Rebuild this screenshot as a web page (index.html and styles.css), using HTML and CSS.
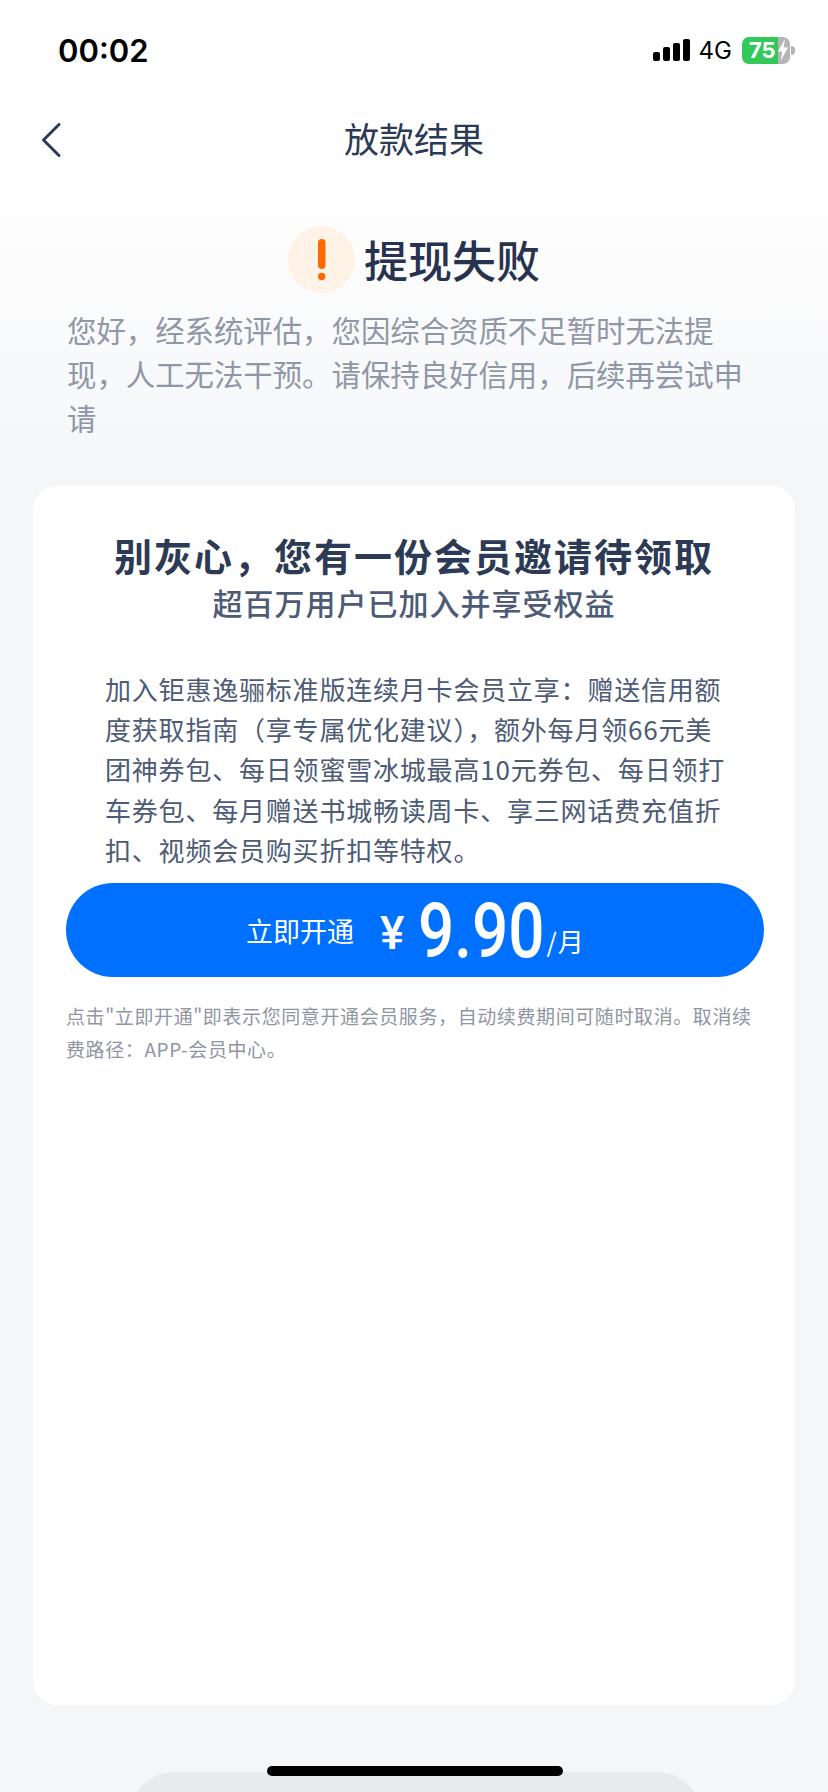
FILE: index.html
```html
<!DOCTYPE html>
<html lang="zh-CN">
<head>
<meta charset="utf-8">
<title>放款结果</title>
<link rel="stylesheet" href="styles.css">
</head>
<body>
<div class="page">
  <header class="status-bar">
    <span class="clock">00:02</span>
    <div class="status-icons">
      <div class="signal">
        <i class="bar bar-1"></i><i class="bar bar-2"></i><i class="bar bar-3"></i><i class="bar bar-4"></i>
      </div>
      <span class="network">4G</span>
      <div class="battery">
        <div class="battery-body">
          <span class="battery-level">75</span>
          <svg class="bolt" viewBox="0 0 12 22" width="12" height="22"><path d="M8 0 1 12.5h4.2L3.6 22 11 8.6H6.6L8 0Z" fill="#fff"/></svg>
        </div>
        <i class="battery-nub"></i>
      </div>
    </div>
  </header>

  <nav class="nav">
    <svg class="back" viewBox="0 0 20 34" width="20" height="34"><path d="M18 1.5 2.5 17 18 32.5" fill="none" stroke="#2d3a55" stroke-width="3" stroke-linecap="round" stroke-linejoin="round"/></svg>
    <h1 class="nav-title">放款结果</h1>
  </nav>

  <section class="result">
    <div class="result-head">
      <svg class="alert" viewBox="0 0 67 67" width="67" height="67">
        <circle cx="33.5" cy="33.5" r="33.5" fill="#fff3e8"/>
        <rect x="30" y="13" width="7.5" height="30" rx="3.7" fill="#ff6a00"/>
        <circle cx="33.7" cy="50.5" r="3.7" fill="#ff6a00"/>
      </svg>
      <h2 class="result-title">提现失败</h2>
    </div>
    <p class="result-text">您好，经系统评估，您因综合资质不足暂时无法提现，人工无法干预。请保持良好信用，后续再尝试申请</p>
  </section>

  <main class="card">
    <h3 class="card-title">别灰心，您有一份会员邀请待领取</h3>
    <p class="card-sub">超百万用户已加入并享受权益</p>
    <p class="card-body">加入钜惠逸骊标准版连续月卡会员立享：赠送信用额度获取指南（享专属优化建议），额外每月领66元美团神券包、每日领蜜雪冰城最高10元券包、每日领打车券包、每月赠送书城畅读周卡、享三网话费充值折扣、视频会员购买折扣等特权。</p>
    <button class="cta" type="button">
      <span class="cta-label">立即开通</span>
      <span class="cta-currency">¥</span>
      <span class="cta-amount"><span class="cta-digits">9.90</span></span>
      <span class="cta-unit">/月</span>
    </button>
    <p class="note">点击"立即开通"即表示您同意开通会员服务，自动续费期间可随时取消。取消续费路径：APP-会员中心。</p>
  </main>

  <div class="bottom-sheet"></div>
  <div class="home-indicator"></div>
</div>
</body>
</html>
```

FILE: styles.css
```css
* {
  box-sizing: border-box;
}

html,
body {
  margin: 0;
  padding: 0;
}

body {
  font-family: "Noto Sans CJK SC", "Noto Sans", sans-serif;
}

.page {
  position: relative;
  width: 828px;
  height: 1792px;
  overflow: hidden;
  display: flex;
  flex-direction: column;
  background: linear-gradient(180deg, #ffffff 0, #ffffff 160px, #f5f6f8 480px, #f5f6f8 100%);
}

/* Status bar */
.status-bar {
  height: 97px;
  flex: none;
  display: flex;
  align-items: center;
  justify-content: space-between;
  padding: 3px 33px 0 58px;
}

.clock {
  font-family: Inter, sans-serif;
  font-size: 31px;
  font-weight: 600;
  color: #000;
}

.status-icons {
  display: flex;
  align-items: center;
}

.signal {
  display: flex;
  align-items: flex-end;
  gap: 3px;
  height: 22px;
}

.bar {
  display: block;
  width: 7px;
  background: #000;
  border-radius: 2px;
}

.bar-1 { height: 9px; }
.bar-2 { height: 14px; }
.bar-3 { height: 18px; }
.bar-4 { height: 22px; }

.network {
  margin-left: 9px;
  font-family: Inter, sans-serif;
  font-size: 24px;
  color: #000;
}

.battery {
  margin-left: 10px;
  display: flex;
  align-items: center;
}

.battery-body {
  width: 48px;
  height: 27px;
  border-radius: 7px;
  background: linear-gradient(90deg, #34c85a 0, #34c85a 36px, #b5b5b5 36px);
  display: flex;
  align-items: center;
  padding-left: 7px;
}

.battery-level {
  font-family: Inter, sans-serif;
  font-size: 22px;
  font-weight: 700;
  line-height: 27px;
  color: #fff;
}

.bolt {
  flex: none;
  margin-left: 1px;
}

.battery-nub {
  display: block;
  width: 4px;
  height: 9px;
  margin-left: 1px;
  background: #b5b5b5;
  border-radius: 0 4px 4px 0;
}

/* Navigation bar */
.nav {
  position: relative;
  height: 80px;
  flex: none;
  display: flex;
  align-items: center;
  justify-content: center;
}

.back {
  position: absolute;
  left: 41px;
  top: 26px;
}

.nav-title {
  margin: 0;
  font-size: 35px;
  font-weight: 400;
  color: #2d3a55;
}

/* Result summary */
.result {
  padding: 49px 67px 0 68px;
  flex: none;
}

.result-head {
  display: flex;
  align-items: center;
  justify-content: center;
  gap: 9px;
}

.alert {
  margin-left: -1px;
}

.result-title {
  margin: 0;
  font-size: 44px;
  line-height: 67px;
  font-weight: 500;
  color: #28324f;
}

.result-text {
  margin: 14px 0 0 -1px;
  font-size: 29.4px;
  line-height: 44px;
  color: #8f97a6;
}

/* Membership card */
.card {
  width: 762px;
  height: 1219px;
  flex: none;
  margin: 47px 0 0 33px;
  padding: 44px 33px 0;
  background: #fff;
  border-radius: 24px;
}

.card-title {
  margin: 0;
  text-align: center;
  font-size: 38px;
  line-height: 50px;
  font-weight: 700;
  letter-spacing: 2px;
  color: #2d3a55;
}

.card-sub {
  margin: 1px 0 0;
  text-align: center;
  font-size: 30px;
  line-height: 42px;
  font-weight: 500;
  letter-spacing: 1px;
  color: #4d5b76;
}

.card-body {
  margin: 46px 0 0;
  padding: 0 32px 0 39px;
  font-size: 26px;
  line-height: 40.2px;
  letter-spacing: 0.8px;
  color: #4d5b76;
}

.cta {
  display: flex;
  align-items: center;
  width: 698px;
  height: 94px;
  margin: 13px 0 0;
  padding: 0 0 0 180px;
  border: 0;
  border-radius: 47px;
  background: #0070ff;
  color: #fff;
  font-family: inherit;
}

.cta-label {
  font-size: 27px;
}

.cta-currency {
  margin-left: 26px;
  font-family: Roboto, sans-serif;
  font-size: 46px;
  font-weight: 500;
  line-height: 94px;
  padding-top: 6px;
}

.cta-amount {
  display: block;
  width: 128px;
  margin-left: 14px;
  padding-top: 3px;
}

.cta-digits {
  display: inline-block;
  font-family: Roboto, sans-serif;
  font-size: 76px;
  font-weight: 500;
  line-height: 91px;
  transform: scaleX(0.84);
  transform-origin: left center;
}

.cta-unit {
  font-size: 26px;
  margin-top: 20px;
  letter-spacing: 1px;
}

.note {
  margin: 22px 0 0;
  font-size: 19px;
  line-height: 33px;
  letter-spacing: 0.6px;
  color: #8f95a3;
}

/* Sheet edge and home indicator at the bottom of the screen */
.bottom-sheet {
  flex: none;
  width: 575px;
  height: 120px;
  margin: 67px 0 0 128px;
  background: #e9eaec;
  border-radius: 47px 47px 0 0;
}

.home-indicator {
  position: absolute;
  left: 267px;
  top: 1766px;
  width: 296px;
  height: 10px;
  border-radius: 5px;
  background: #000;
}
```
